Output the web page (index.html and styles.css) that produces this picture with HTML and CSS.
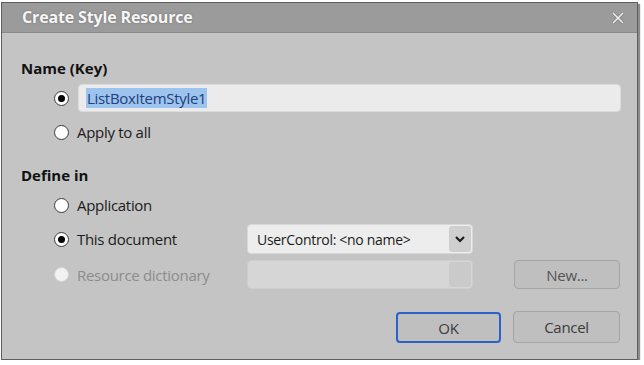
FILE: index.html
```html
<!DOCTYPE html>
<html>
<head>
<meta charset="utf-8">
<link rel="stylesheet" href="styles.css">
</head>
<body>
<div class="window">
  <div class="titlebar">
    <span class="title">Create Style Resource</span>
    <svg class="close" width="14" height="14" viewBox="0 0 14 14"><path d="M2 2 L12 12 M12 2 L2 12" stroke="#4a4a4a" stroke-width="3" fill="none" opacity="0.35"/><path d="M2 2 L12 12 M12 2 L2 12" stroke="#f2f2f2" stroke-width="1.5" fill="none"/></svg>
  </div>
  <div class="content">
    <div class="heading h1">Name (Key)</div>
    <div class="row name-row">
      <span class="radio checked"></span>
      <div class="textbox"><span class="sel">ListBoxItemStyle1</span></div>
    </div>
    <div class="row apply-row">
      <span class="radio"></span><span class="label">Apply to all</span>
    </div>
    <div class="heading h2">Define in</div>
    <div class="row app-row">
      <span class="radio"></span><span class="label">Application</span>
    </div>
    <div class="grid">
      <div class="opt"><span class="radio checked"></span><span class="label">This document</span></div>
      <div class="combo"><span class="combo-text">UserControl: &lt;no name&gt;</span><span class="arrow"><svg width="12" height="10" viewBox="0 0 12 10"><path d="M2 3 L6 7 L10 3" stroke="#1e1e1e" stroke-width="2.2" fill="none"/></svg></span></div>
      <div></div>
      <div></div>
      <div class="opt disabled"><span class="radio"></span><span class="label">Resource dictionary</span></div>
      <div class="combo off"><span class="combo-text"></span><span class="arrow"></span></div>
      <div></div>
      <div class="btn new">New...</div>
    </div>
    <div class="actions">
      <div class="btn ok">OK</div>
      <div class="btn cancel">Cancel</div>
    </div>
  </div>
</div>
</body>
</html>
```
FILE: styles.css
```css
html, body { margin: 0; padding: 0; background: #ffffff; }
body { font-family: "Open Sans", "Noto Sans", sans-serif; color: #1b1b1b; }
.window {
  margin: 2px 0 0 1px;
  width: 637px;
  height: 358px;
  box-sizing: border-box;
  border: 1px solid #5e5e5e;
  background: #c4c4c4;
  box-shadow: 2px 2px 1px rgba(0,0,0,0.45);
  display: flex;
  flex-direction: column;
}
.titlebar {
  height: 30px;
  box-sizing: border-box;
  background: #9b9b9b;
  border-bottom: 1px solid #8a8a8a;
  display: flex;
  align-items: center;
  justify-content: space-between;
  padding: 0 12px 1px 20px;
}
.title {
  font-family: "Open Sans", sans-serif;
  font-weight: 700;
  font-size: 16px;
  letter-spacing: -0.15px;
  color: #f6f6f6;
  text-shadow: 0 0 2px rgba(60,60,60,0.5);
}
.close { display: block; margin-top: 1px; }
.content {
  padding: 0 16px 0 19px;
  display: flex;
  flex-direction: column;
}
.heading {
  font-weight: 700;
  font-size: 15px;
  letter-spacing: 0;
  line-height: 20px;
  height: 20px;
  color: #111;
}
.h1 { margin-top: 25px; }
.h2 { margin-top: 23px; }
.row { display: flex; align-items: center; padding-left: 33px; }
.name-row { margin-top: 6px; height: 28px; }
.apply-row { margin-top: 10px; height: 20px; }
.app-row { margin-top: 10px; height: 20px; }
.radio {
  width: 15px;
  height: 15px;
  box-sizing: border-box;
  border-radius: 50%;
  border: 1.5px solid #3a3a3a;
  background: #ffffff;
  flex: none;
  display: flex;
  align-items: center;
  justify-content: center;
}
.radio.checked::after {
  content: "";
  width: 7px;
  height: 7px;
  border-radius: 50%;
  background: #000;
}
.label {
  margin-left: 8px;
  font-size: 15px;
  letter-spacing: -0.3px;
  line-height: 20px;
  color: #1b1b1b;
}
.textbox {
  margin-left: 9px;
  flex: 1;
  height: 28px;
  box-sizing: border-box;
  background: #ebebeb;
  border-radius: 4px;
  border: 1px solid #dcdcdc;
  display: flex;
  align-items: center;
  padding-left: 7px;
}
.sel {
  background: #9cc4ef;
  color: #23407a;
  font-size: 15px;
  letter-spacing: -0.3px;
  line-height: 20px;
  padding: 0 1px;
}
.grid {
  margin-top: 9px;
  display: grid;
  grid-template-columns: 193px 226px 41px 106px;
  grid-template-rows: 30px 29px;
  row-gap: 6px;
  padding-left: 33px;
}
.opt { display: flex; align-items: center; }
.opt.disabled .radio { border-color: #d2d2d2; background: #f2f2f2; }
.opt.disabled .label { color: #8c8c8c; }
.combo {
  box-sizing: border-box;
  border-radius: 4px;
  background: #ededed;
  border: 1px solid #d8d8d8;
  display: flex;
  align-items: center;
  justify-content: space-between;
  padding: 1px 1px 1px 9px;
}
.combo-text { font-size: 14px; letter-spacing: -0.3px; color: #1b1b1b; }
.arrow {
  width: 22px;
  height: 26px;
  background: #cfcfcf;
  border-radius: 3px;
  display: flex;
  align-items: center;
  justify-content: center;
}
.combo.off { background: #d6d6d6; border-color: #cdcdcd; }
.combo.off .arrow { background: #cacaca; height: 25px; }
.btn {
  box-sizing: border-box;
  border: 1px solid #a4a4a4;
  border-radius: 4px;
  background: #bfbfbf;
  display: flex;
  align-items: center;
  justify-content: center;
  font-size: 15px;
  letter-spacing: -0.3px;
  color: #3c3c3c;
}
.new { color: #555; }
.actions {
  margin-top: 22px;
  display: flex;
  justify-content: flex-end;
  gap: 12px;
  padding-right: 1px;
  height: 32px;
}
.ok {
  width: 105px;
  height: 31px;
  margin-top: 1px;
  border: 2px solid #2c62c5;
}
.cancel { width: 107px; height: 32px; }
```
